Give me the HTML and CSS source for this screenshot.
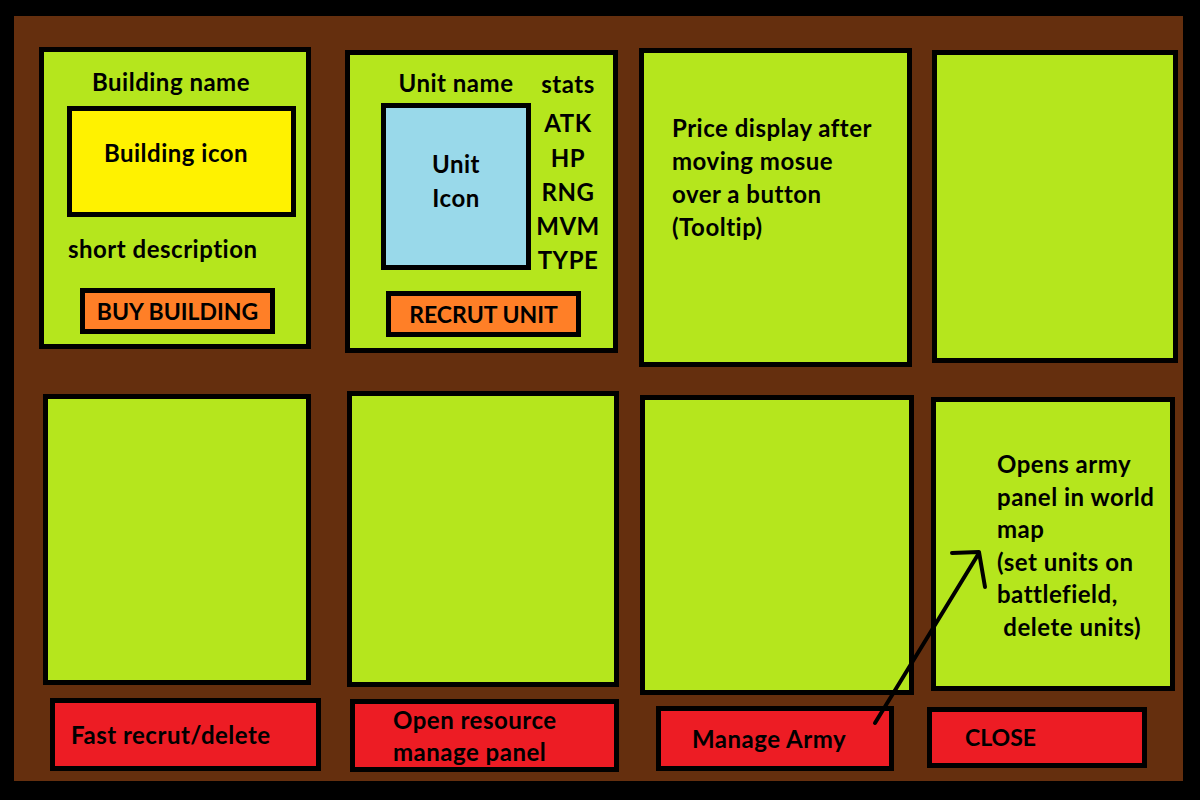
FILE: index.html
```html
<!DOCTYPE html>
<html lang="en">
<head>
  <meta charset="UTF-8">
  <meta name="viewport" content="width=device-width, initial-scale=1.0">
  <title>Town Panel Mockup</title>
  <link rel="stylesheet" href="styles.css">
</head>
<body>
  <div class="board">
    <!-- obere Reihe -->
    <div class="row row-top">
      <section class="panel building-card">
        <h2 class="building-name">Building name</h2>
        <div class="building-icon">Building icon</div>
        <p class="building-desc">short description</p>
        <button class="buy-btn">BUY BUILDING</button>
      </section>

      <section class="panel unit-card">
        <div class="unit-top">
          <div class="unit-main">
            <h2 class="unit-name">Unit name</h2>
            <div class="unit-icon">Unit<br>Icon</div>
          </div>
          <ul class="unit-stats">
            <li class="stats-head">stats</li>
            <li>ATK</li>
            <li>HP</li>
            <li>RNG</li>
            <li>MVM</li>
            <li>TYPE</li>
          </ul>
        </div>
        <button class="recruit-btn">RECRUT UNIT</button>
      </section>

      <section class="panel tooltip-card">
        <p>Price display after<br>moving mosue<br>over a button<br>(Tooltip)</p>
      </section>

      <section class="panel slot-a"></section>
    </div>

    <!-- mittlere Reihe -->
    <div class="row row-mid">
      <section class="panel slot-b"></section>
      <section class="panel slot-c"></section>
      <section class="panel slot-d"></section>
      <section class="panel army-card">
        <p>Opens army<br>panel in world<br>map<br>(set units on<br>battlefield,<br>&nbsp;delete units)</p>
      </section>
    </div>

    <!-- Aktionsleiste -->
    <div class="row row-actions">
      <button class="action-btn fast-btn">Fast recrut/delete</button>
      <button class="action-btn resource-btn">Open resource<br>manage panel</button>
      <button class="action-btn army-btn">Manage Army</button>
      <button class="action-btn close-btn">CLOSE</button>
    </div>
  </div>

  <!-- Pfeil von "Manage Army" zur Beschreibung -->
  <svg class="arrow" width="1200" height="800" viewBox="0 0 1200 800">
    <path d="M875 723 L979 553" />
    <path d="M952 553 L979 552 L985 587" />
  </svg>
</body>
</html>
```

FILE: styles.css
```css
* {
  margin: 0;
  padding: 0;
  box-sizing: border-box;
}

body {
  background-color: #000;
  font-family: Lato, "Open Sans", sans-serif;
  font-weight: 700;
  font-size: 24px;
  line-height: 33px;
  letter-spacing: 0.5px;
  color: #000;
}

h2 {
  font-size: inherit;
  font-weight: inherit;
}

button {
  font: inherit;
  letter-spacing: inherit;
  color: inherit;
  cursor: pointer;
}

.board {
  margin: 16px 17px 0 14px;
  height: 765px;
  background-color: #652f0e;
}

.row {
  display: flex;
  align-items: flex-start;
}

.row-top {
  height: 360px;
}

.row-mid {
  height: 320px;
}

.panel {
  flex: none;
  background-color: #b5e61d;
  border: 5px solid #000;
}

/* obere Reihe */
.building-card {
  width: 272px;
  height: 302px;
  margin: 31px 0 0 25px;
}

.unit-card {
  width: 273px;
  height: 303px;
  margin: 34px 0 0 34px;
}

.tooltip-card {
  width: 273px;
  height: 319px;
  margin: 32px 0 0 21px;
  padding: 58px 0 0 28px;
}

.slot-a {
  width: 246px;
  height: 313px;
  margin: 34px 0 0 20px;
}

/* mittlere Reihe */
.slot-b {
  width: 268px;
  height: 291px;
  margin: 18px 0 0 29px;
}

.slot-c {
  width: 272px;
  height: 296px;
  margin: 15px 0 0 36px;
}

.slot-d {
  width: 274px;
  height: 300px;
  margin: 19px 0 0 21px;
}

.army-card {
  width: 244px;
  height: 294px;
  margin: 21px 0 0 17px;
  padding: 46px 0 0 61px;
  line-height: 32.5px;
}

/* Gebäude */
.building-name {
  margin-top: 13px;
  padding-right: 8px;
  text-align: center;
}

.building-icon {
  width: 229px;
  height: 111px;
  margin: 8px 0 0 23px;
  padding: 25px 11px 0 0;
  background-color: #fff200;
  border: 5px solid #000;
  text-align: center;
}

.building-desc {
  margin: 15px 0 0 24px;
}

.buy-btn,
.recruit-btn {
  display: block;
  width: 195px;
  height: 46px;
  background-color: #ff7f27;
  border: 5px solid #000;
  font-size: 23px;
  letter-spacing: 0;
  text-align: center;
}

.buy-btn {
  margin: 23px 0 0 36px;
}

/* Einheit */
.unit-top {
  display: flex;
  height: 236px;
}

.unit-main {
  width: 150px;
  margin-left: 31px;
}

.unit-name {
  margin-top: 11px;
  text-align: center;
}

.unit-icon {
  height: 167px;
  margin-top: 4px;
  padding-top: 39px;
  background-color: #99d9ea;
  border: 5px solid #000;
  line-height: 34px;
  text-align: center;
}

.unit-stats {
  flex: 1;
  list-style: none;
  padding: 12px 8px 0 0;
  line-height: 34.25px;
  text-align: center;
}

.stats-head {
  margin-bottom: 5px;
}

.recruit-btn {
  margin-left: 36px;
}

/* Aktionsleiste */
.action-btn {
  flex: none;
  background-color: #ed1c24;
  border: 5px solid #000;
  text-align: left;
}

.fast-btn {
  width: 271px;
  height: 73px;
  margin: 2px 0 0 36px;
  padding-left: 16px;
}

.resource-btn {
  width: 269px;
  height: 73px;
  margin: 3px 0 0 29px;
  padding-left: 38px;
  line-height: 32px;
}

.army-btn {
  width: 238px;
  height: 65px;
  margin: 10px 0 0 37px;
  padding-left: 31px;
}

.close-btn {
  width: 220px;
  height: 61px;
  margin: 11px 0 0 33px;
  padding-left: 33px;
  font-size: 23px;
  letter-spacing: 0;
}

.arrow {
  position: absolute;
  left: 0;
  top: 0;
  pointer-events: none;
}

.arrow path {
  fill: none;
  stroke: #000;
  stroke-width: 4;
  stroke-linecap: round;
  stroke-linejoin: round;
}
```
